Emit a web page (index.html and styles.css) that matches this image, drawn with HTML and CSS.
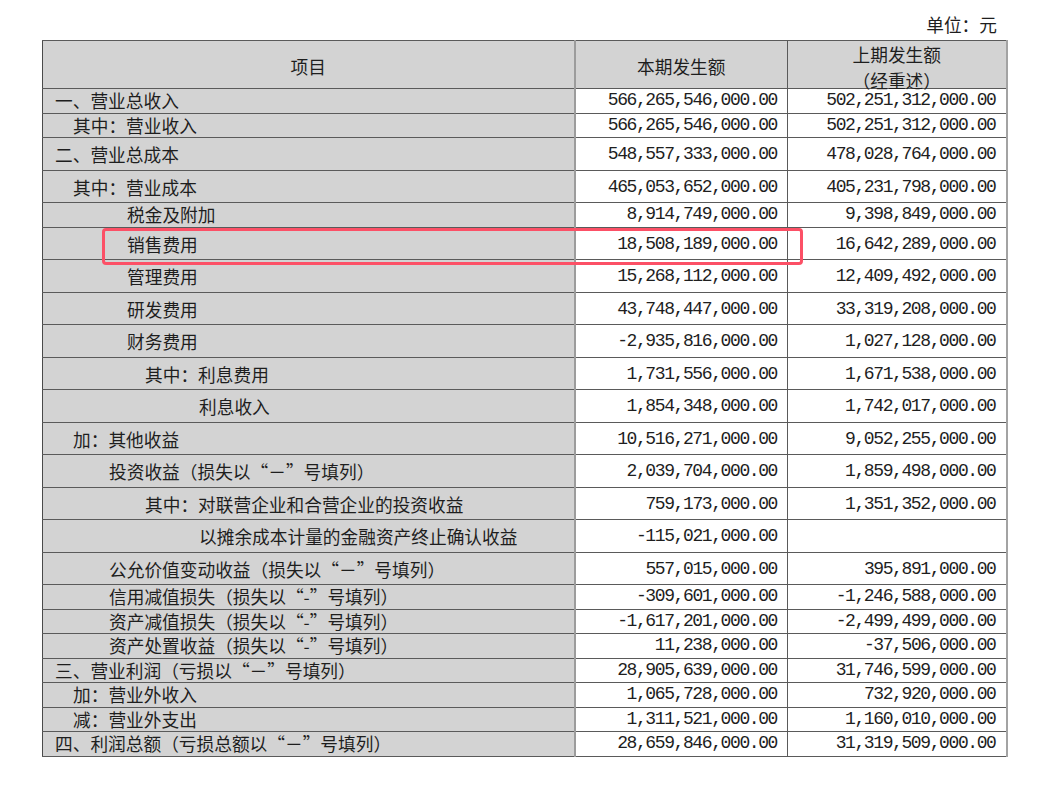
FILE: index.html
```html
<!DOCTYPE html>
<html lang="zh-CN">
<head>
<meta charset="utf-8">
<title>利润表</title>
<link rel="stylesheet" href="styles.css">
</head>
<body>
<div class="page">
  <div class="unit">单位：元</div>
  <div class="table-wrap">
    <table class="report">
      <colgroup>
        <col class="c-item">
        <col class="c-cur">
        <col class="c-prev">
      </colgroup>
      <thead>
        <tr class="head">
          <th class="label-head">项目</th>
          <th class="num-head">本期发生额</th>
          <th class="num-head last"><div class="stack"><div class="hl">上期发生额</div><div class="hl">（经重述）</div></div></th>
        </tr>
      </thead>
      <tbody>
        <tr class="short"><td class="label i0">一、营业总收入</td><td class="num">566,265,546,000.00</td><td class="num last">502,251,312,000.00</td></tr>
        <tr class="short"><td class="label i1">其中：营业收入</td><td class="num">566,265,546,000.00</td><td class="num last">502,251,312,000.00</td></tr>
        <tr class="tall"><td class="label i0">二、营业总成本</td><td class="num">548,557,333,000.00</td><td class="num last">478,028,764,000.00</td></tr>
        <tr class="tall"><td class="label i1">其中：营业成本</td><td class="num">465,053,652,000.00</td><td class="num last">405,231,798,000.00</td></tr>
        <tr class="short"><td class="label i4">税金及附加</td><td class="num">8,914,749,000.00</td><td class="num last">9,398,849,000.00</td></tr>
        <tr class="tall"><td class="label i4">销售费用</td><td class="num">18,508,189,000.00</td><td class="num last">16,642,289,000.00</td></tr>
        <tr class="tall"><td class="label i4">管理费用</td><td class="num">15,268,112,000.00</td><td class="num last">12,409,492,000.00</td></tr>
        <tr class="tall"><td class="label i4">研发费用</td><td class="num">43,748,447,000.00</td><td class="num last">33,319,208,000.00</td></tr>
        <tr class="tall"><td class="label i4">财务费用</td><td class="num">-2,935,816,000.00</td><td class="num last">1,027,128,000.00</td></tr>
        <tr class="tall"><td class="label i5">其中：利息费用</td><td class="num">1,731,556,000.00</td><td class="num last">1,671,538,000.00</td></tr>
        <tr class="tall"><td class="label i8">利息收入</td><td class="num">1,854,348,000.00</td><td class="num last">1,742,017,000.00</td></tr>
        <tr class="tall"><td class="label i1">加：其他收益</td><td class="num">10,516,271,000.00</td><td class="num last">9,052,255,000.00</td></tr>
        <tr class="tall"><td class="label i3">投资收益（损失以“－”号填列）</td><td class="num">2,039,704,000.00</td><td class="num last">1,859,498,000.00</td></tr>
        <tr class="tall"><td class="label i5">其中：对联营企业和合营企业的投资收益</td><td class="num">759,173,000.00</td><td class="num last">1,351,352,000.00</td></tr>
        <tr class="tall"><td class="label i8">以摊余成本计量的金融资产终止确认收益</td><td class="num">-115,021,000.00</td><td class="num last"></td></tr>
        <tr class="tall"><td class="label i3">公允价值变动收益（损失以“－”号填列）</td><td class="num">557,015,000.00</td><td class="num last">395,891,000.00</td></tr>
        <tr class="short"><td class="label i3">信用减值损失（损失以“-”号填列）</td><td class="num">-309,601,000.00</td><td class="num last">-1,246,588,000.00</td></tr>
        <tr class="short"><td class="label i3">资产减值损失（损失以“-”号填列）</td><td class="num">-1,617,201,000.00</td><td class="num last">-2,499,499,000.00</td></tr>
        <tr class="short"><td class="label i3">资产处置收益（损失以“-”号填列）</td><td class="num">11,238,000.00</td><td class="num last">-37,506,000.00</td></tr>
        <tr class="short"><td class="label i0">三、营业利润（亏损以“－”号填列）</td><td class="num">28,905,639,000.00</td><td class="num last">31,746,599,000.00</td></tr>
        <tr class="short"><td class="label i1">加：营业外收入</td><td class="num">1,065,728,000.00</td><td class="num last">732,920,000.00</td></tr>
        <tr class="short"><td class="label i1">减：营业外支出</td><td class="num">1,311,521,000.00</td><td class="num last">1,160,010,000.00</td></tr>
        <tr class="short"><td class="label i0">四、利润总额（亏损总额以“－”号填列）</td><td class="num">28,659,846,000.00</td><td class="num last">31,319,509,000.00</td></tr>
      </tbody>
    </table>
    <div class="highlight"></div>
  </div>
</div>
</body>
</html>
```

FILE: styles.css
```css
html, body {
  margin: 0;
  padding: 0;
  background: #ffffff;
}

body {
  font-family: "Noto Sans CJK SC", "Liberation Serif", serif;
  color: #1e1e1e;
  font-size: 17.7px;
}

.page {
  width: 1055px;
  height: 788px;
}

.unit {
  height: 40px;
  box-sizing: border-box;
  padding-top: 13px;
  padding-right: 58px;
  text-align: right;
  line-height: 22px;
  font-size: 17.7px;
}

.table-wrap {
  position: relative;
  margin-left: 42px;
  width: 964px;
}

.report {
  width: 964px;
  border-collapse: collapse;
  table-layout: fixed;
  border-left: 1px solid #4a4a4a;
  border-top: 1px solid #555;
}

.c-item { width: 532px; }
.c-cur { width: 213px; }
.c-prev { width: 219px; }

.report th,
.report td {
  border-top: 1px solid #5a5a5a;
  border-bottom: 1px solid #5a5a5a;
  font-weight: normal;
  line-height: 20px;
  white-space: nowrap;
  vertical-align: middle;
  box-sizing: border-box;
}

.report th {
  background: #d3d3d3;
  text-align: center;
  padding: 3px 0 0 0;
}

.head {
  height: 48px;
}

.report th:nth-child(2) {
  border-left: 2px solid #9c9c9c;
}

.report th.last {
  border-left: 1px solid #5a5a5a;
  padding-top: 4px;
}

.stack {
  height: 43px;
  display: flex;
  flex-direction: column;
  justify-content: center;
}

.hl {
  flex: none;
  line-height: 26px;
  height: 26px;
}

.report .last {
  border-right: 2px solid #a3a3a3;
}

.label {
  background: #d3d3d3;
  text-align: left;
}

.num {
  background: #ffffff;
  text-align: right;
  font-family: "Liberation Mono", "DejaVu Sans Mono", monospace;
  font-size: 18px;
  letter-spacing: -1.4px;
  padding-right: 10px;
  border-left: 2px solid #9c9c9c;
}

.report td.num.last {
  border-left: 1px solid #5a5a5a;
}

.short {
  height: 24.5px;
}

.short td {
  padding-top: 0;
}

.tall {
  height: 32.5px;
}

.tall td {
  padding-top: 2px;
}

.i0 { padding-left: 12px; }
.i1 { padding-left: 30px; }
.i3 { padding-left: 66px; }
.i4 { padding-left: 84px; }
.i5 { padding-left: 102px; }
.i8 { padding-left: 156px; }

.highlight {
  position: absolute;
  left: 60px;
  top: 188px;
  width: 701px;
  height: 37px;
  box-sizing: border-box;
  border: 3px solid #fc5066;
  border-radius: 4px;
  pointer-events: none;
}
```
